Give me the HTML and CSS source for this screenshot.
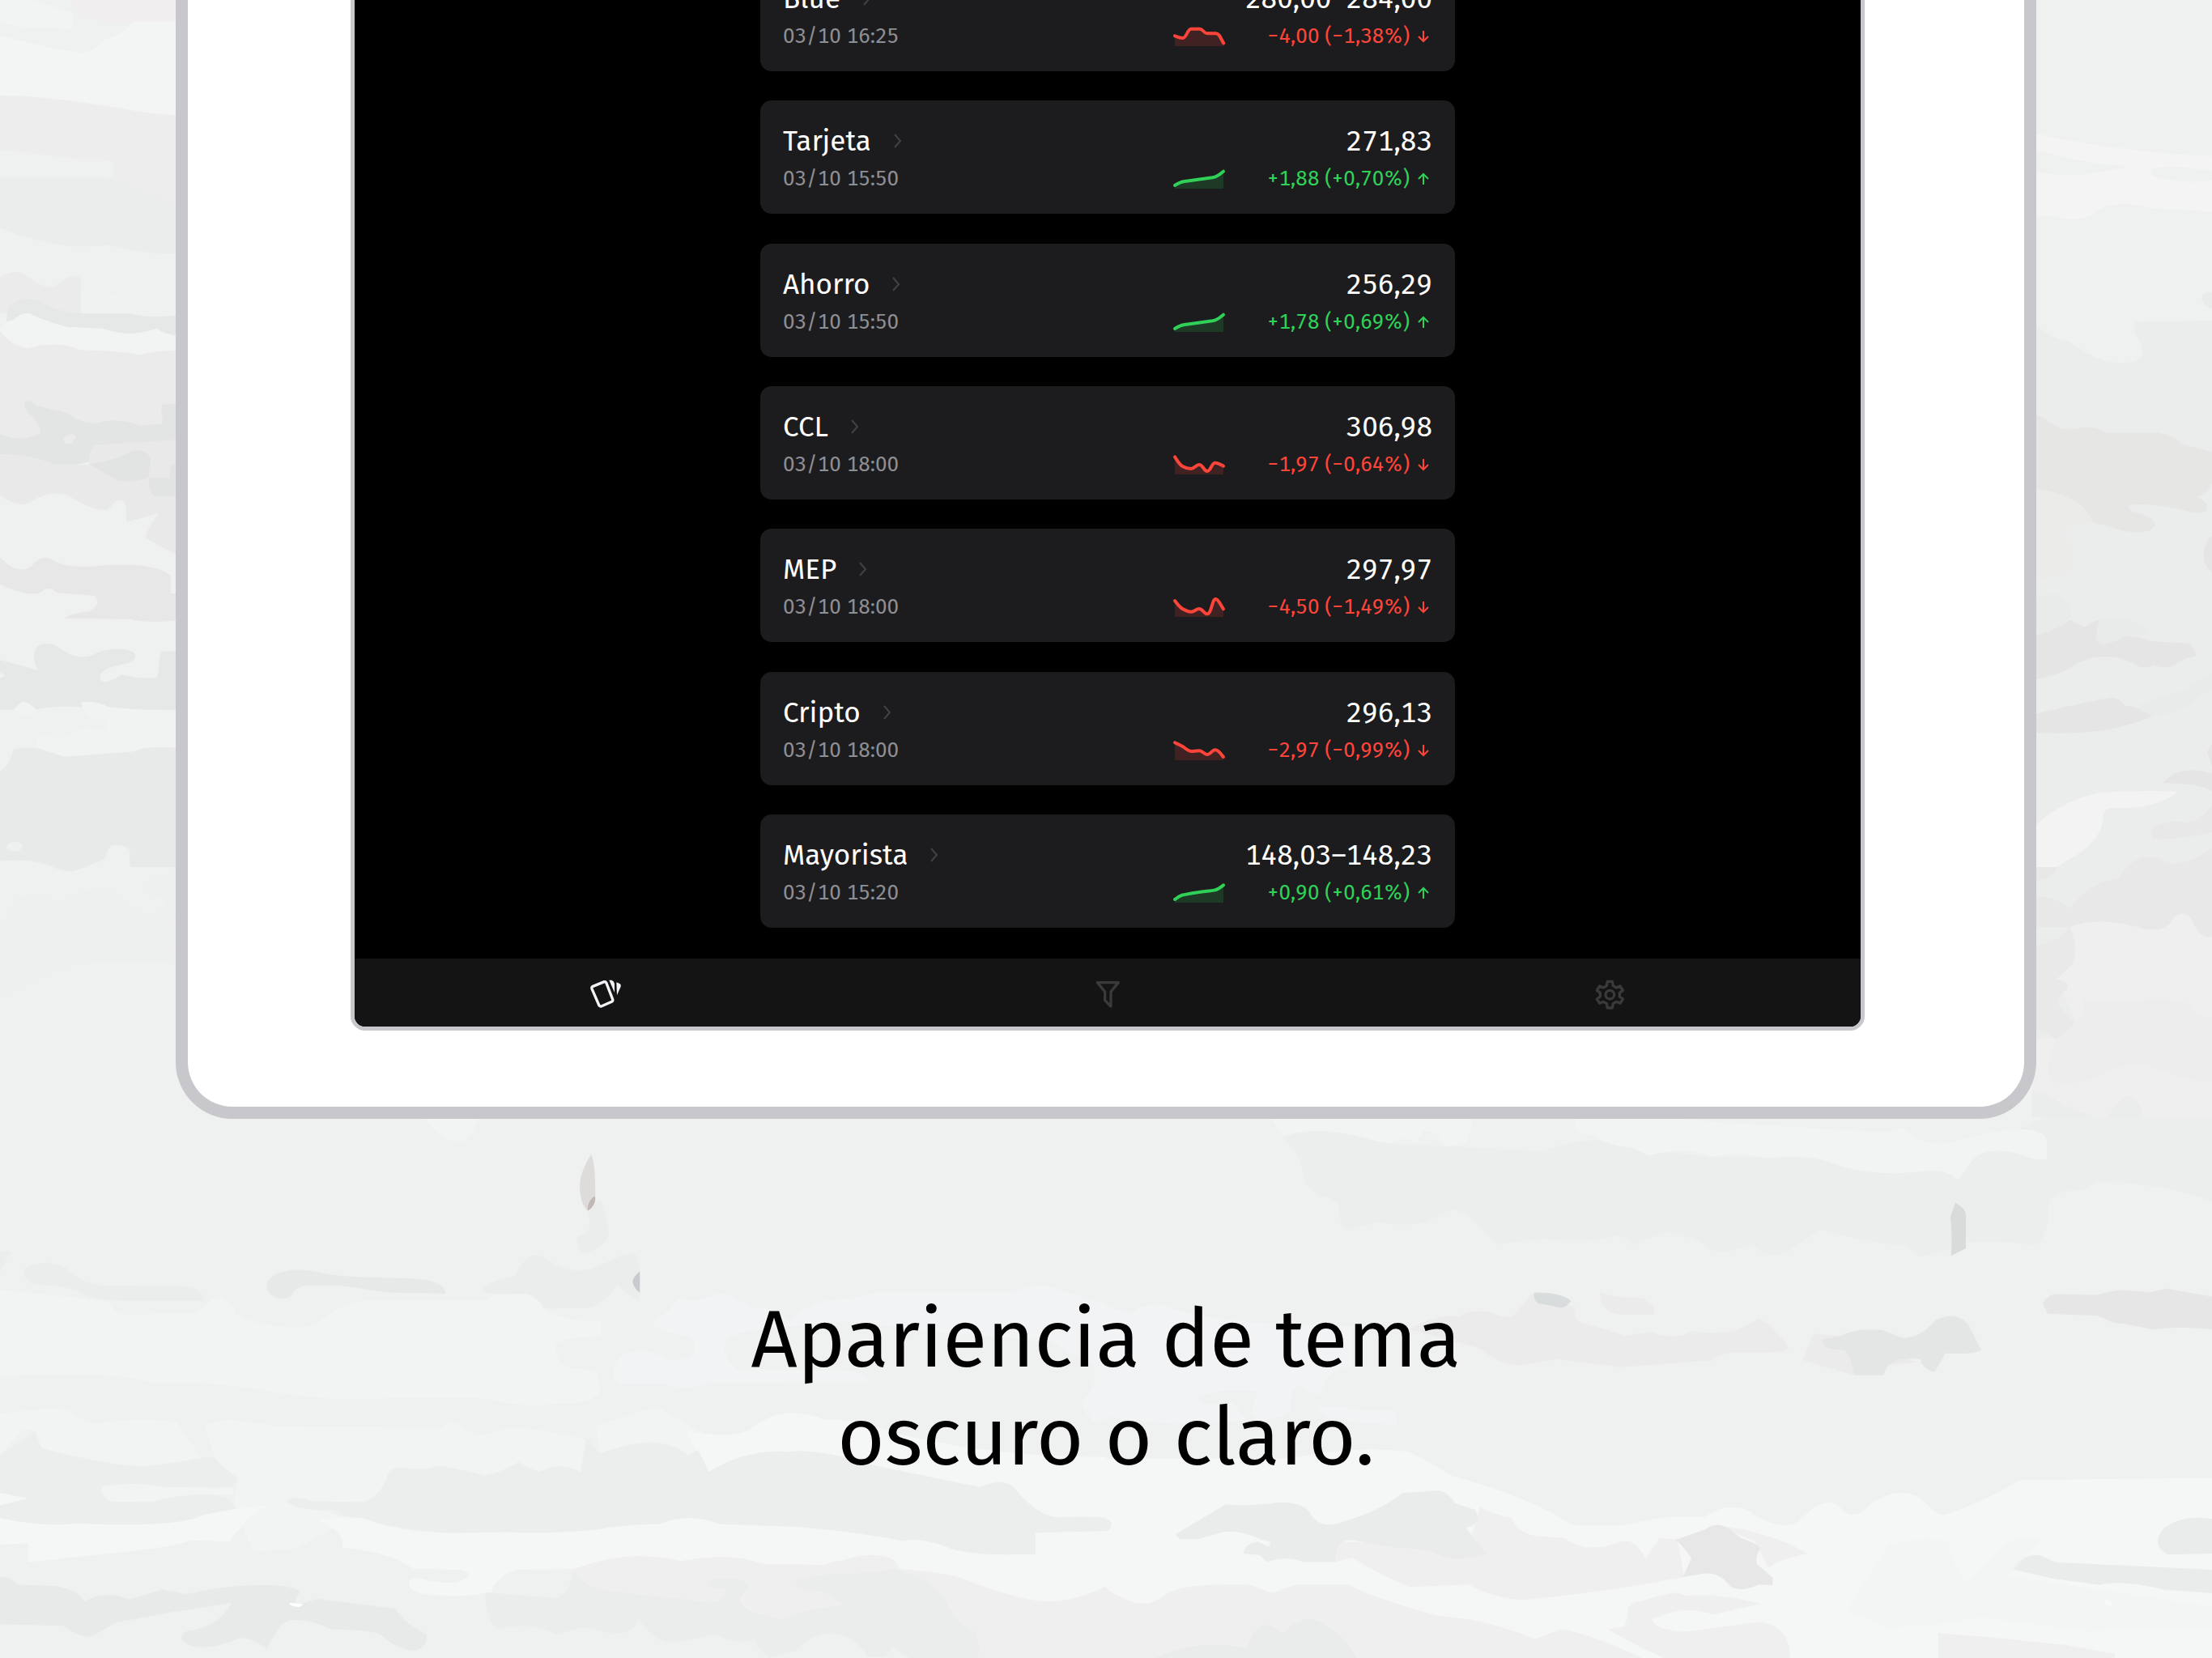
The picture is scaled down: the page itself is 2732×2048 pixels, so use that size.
FILE: index.html
```html
<!DOCTYPE html>
<html lang="es">
<head>
<meta charset="utf-8">
<meta name="viewport" content="width=device-width, initial-scale=1">
<title>Apariencia de tema oscuro o claro</title>
<link rel="stylesheet" href="styles.css">
</head>
<body>
<div class="page">
<svg class="backdrop" viewBox="0 0 2732 2048" preserveAspectRatio="xMidYMid slice" aria-hidden="true">
  <!-- left edge -->
  <g transform="scale(.3333 .8801)">
    <path fill="#f2f4f3" d="M0 0H120L265 18Q280 30 262 40Q230 43 200 37Q150 43 0 32Z"/>
    <path fill="#f0eeee" d="M270 0H660V30H480Q340 34 270 10Z"/>
    <path fill="#f3f5f4" d="M0 50Q200 70 310 74Q350 72 385 56Q450 50 495 30H660V162Q560 160 460 153Q150 133 0 134Z"/>
    <path fill="#eeeded" d="M0 134Q150 133 460 153Q560 160 660 162V290Q560 270 440 256L0 250Z"/>
    <path fill="#eff1f0" d="M0 210L310 224H405Q420 228 420 238Q420 250 400 251H0Z"/>
    <path fill="#ebedec" d="M0 249H400Q560 270 660 290V356Q560 358 400 344Q240 350 140 337Q60 330 0 319Z"/>
    <path fill="#ecebeb" d="M0 390Q60 372 120 393Q190 412 230 393Q260 387 300 387V440H0Z"/>
    <path fill="#f0f2f1" d="M302 408L520 418Q560 422 530 430L490 440H302Z"/>
    <path fill="#e6e8e7" d="M25 448Q25 428 50 425Q100 414 150 423Q210 438 310 440H480Q560 448 660 442V472H500Q350 460 210 458Q100 440 25 452Z"/>
    <path fill="#ebebeb" d="M0 465L100 480H660V620H380L0 640Z"/>
    <path fill="#f2f4f3" d="M0 463Q15 450 45 450Q80 438 110 440Q160 450 250 459L380 461Q480 475 580 461Q610 470 660 471V492Q580 492 520 498Q450 492 300 491Q210 477 100 489Q30 483 0 463Z"/>
    <path fill="#e3e5e4" d="M0 609Q90 622 150 608Q155 602 120 585Q80 573 95 563Q110 560 140 570Q210 575 250 580Q320 600 390 591Q450 587 520 597L600 595Q605 590 598 578Q595 567 610 567H660V618L350 625Q330 635 330 648Q270 655 200 652Q90 636 0 638ZM235 617Q240 625 265 622Q290 613 275 610Q245 607 235 617Z" fill-rule="evenodd"/>
    <path fill="#e9e9e9" d="M0 638Q90 636 200 652H330Q330 630 350 625L660 617V780L540 755Q545 740 590 720L468 733Q470 700 450 702Q430 700 400 716Q350 718 260 697Q190 685 110 705Q70 714 0 695Z"/>
    <path fill="#e2e4e3" d="M330 651Q410 649 490 633Q550 629 558 646L550 670Q500 678 440 675ZM550 671H630Q625 650 650 651V697H580Q550 694 550 671Z"/>
    <path fill="#e7e7e7" d="M0 782Q70 810 120 793Q160 775 210 789Q270 799 400 793Q580 790 632 808V833H660V870Q560 876 480 869L240 868Q260 860 330 858Q380 848 350 836L210 832Q180 820 150 832Q100 838 0 820Z"/>
    <path fill="#e6e8e7" d="M0 926Q80 934 142 941Q110 920 140 907Q180 897 230 912Q300 930 360 916Q440 906 495 915Q520 928 440 934Q360 939 372 955Q390 962 450 947Q540 954 580 951Q590 945 590 925Q595 913 610 914H660V996H350Q250 987 130 996H0V952L20 948L0 943Z"/>
    <path fill="#f1f3f2" d="M50 996L80 985Q110 985 135 996Q90 1012 50 996ZM300 986Q360 983 400 992Q550 998 660 998V1050Q540 1045 490 1055Q320 1057 240 1063Q190 1060 135 1048Q140 1030 170 1032Q220 1045 270 1030Q310 1018 370 1024Q400 1023 395 1015Q390 1008 340 1010Q310 1003 300 986Z"/>
    <path fill="#e8eae9" d="M0 1082Q30 1078 50 1052Q80 1048 140 1050L240 1062Q400 1058 490 1055Q550 1046 660 1050V1217H490Q475 1218 482 1195Q470 1185 420 1186Q400 1187 390 1205Q330 1216 270 1223Q220 1222 180 1214Q90 1204 0 1209ZM23 1190Q40 1197 70 1194Q95 1187 70 1182Q30 1180 23 1190Z" fill-rule="evenodd"/>
    <path fill="#eceeed" d="M0 1305Q30 1290 60 1262Q140 1250 220 1268Q300 1245 410 1249Q450 1270 500 1280Q600 1290 620 1260Q520 1260 530 1240Q580 1228 660 1225V1240L640 1350H400Q230 1345 0 1400Z" opacity=".35"/>
  </g>
  <!-- right edge -->
  <g transform="translate(2490 0) scale(.3333 .8801)">
    <path fill="#ebedec" d="M60 445Q90 470 200 480Q320 515 430 508Q490 500 460 480Q420 460 445 452L726 450V1568H60Z"/>
    <path fill="#f3f4f3" d="M60 187Q420 215 726 219V240Q560 230 510 237Q490 243 510 247Q620 260 726 253V297L500 292Q360 278 290 299Q220 315 140 303H60V241Q220 250 290 243L420 234Q220 228 60 208Z"/>
    <path fill="#e9ebea" d="M726 410Q690 408 688 420Q700 432 726 433Z"/>
    <path fill="#e6e6e4" d="M60 578L165 601Q210 605 240 600Q280 597 340 607H530Q590 612 620 624L726 634V678Q710 692 670 697Q715 705 708 715Q690 724 630 717Q520 707 450 708Q400 708 430 718Q520 725 514 738Q490 752 400 745L285 733Q240 695 60 685Z"/>
    <path fill="#ebebea" d="M60 685Q250 695 285 733Q180 735 175 750Q230 775 215 796Q170 815 60 815Z"/>
    <path fill="#e5e5e5" d="M726 752Q695 760 695 780Q695 795 726 803ZM60 892Q150 885 200 870L255 880Q280 873 310 869Q295 890 300 900Q330 910 370 896Q430 888 500 900L640 903Q660 908 668 921Q610 925 590 933Q550 940 510 933Q470 942 430 930Q310 911 210 935Q160 948 60 954ZM60 1003Q200 990 350 979Q375 978 405 990Q460 993 505 1005Q330 1035 60 1028ZM545 1099Q600 1072 726 1085V1111Q690 1100 545 1099ZM726 1044L708 1055L726 1076Z"/>
    <path fill="#e9ebea" d="M310 869Q430 858 500 890Q440 888 400 893Q330 910 300 900ZM726 945L610 970Q460 985 450 993L500 1004Q610 1005 680 978L726 970ZM60 840Q200 820 204 865Q150 888 60 892Z"/>
    <path fill="#f3f3f3" d="M60 1162Q180 1120 320 1112Q480 1109 600 1111Q540 1130 430 1134H350Q320 1135 320 1155Q300 1185 210 1203L150 1217H60Z"/>
    <path fill="#e8e8e8" d="M726 1129Q690 1152 630 1154Q560 1150 510 1161Q490 1170 510 1178Q620 1178 726 1168ZM200 1275Q270 1237 380 1233Q440 1195 530 1204Q600 1225 726 1190V1315Q680 1320 650 1290Q610 1272 570 1296Q530 1312 440 1300Q300 1287 200 1301H60V1260Q140 1255 200 1275ZM60 1217H152Q140 1235 60 1236Z"/>
    <path fill="#f0efef" d="M200 1301Q300 1287 440 1300Q530 1312 570 1296Q610 1272 650 1290Q680 1320 726 1315V1568H60V1458H150L235 1443L175 1395L150 1374Q225 1350 218 1325Q215 1310 200 1301Z"/>
    <path fill="#e9e9e9" d="M60 1328Q150 1325 200 1301Q235 1335 205 1355L150 1374Q200 1380 190 1388Q150 1400 155 1410L235 1443Q190 1446 150 1458Q100 1445 60 1444Z"/>
    <path fill="#ededed" d="M250 1404Q400 1410 480 1403Q600 1400 640 1410Q680 1430 726 1428V1518Q640 1520 540 1502Q410 1485 330 1508Q210 1525 130 1518Q110 1505 130 1480L150 1458Q220 1440 250 1420Z"/>
    <path fill="#ebedec" d="M60 1532Q110 1532 170 1550L300 1568H60ZM340 1568Q380 1540 420 1538Q460 1542 470 1568Z"/>
  </g>
  <!-- lower left -->
  <g transform="translate(0 1380) scale(.8712 .426)">
    <path fill="#f2f4f3" d="M600 0Q625 70 655 70Q668 60 680 0ZM0 500L130 528L155 535Q162 575 180 573L280 567Q300 525 310 522Q328 530 335 570Q350 600 420 612Q445 610 475 560Q500 532 520 531H690L700 515L740 512Q765 525 770 553Q800 595 852 592V635Q790 640 788 660Q788 720 810 728Q850 730 846 750L852 795Q830 835 795 830Q740 845 688 815Q580 810 520 817Q440 820 370 790Q270 760 215 772Q190 750 110 745L0 750Z"/>
    <path fill="#f2f4f3" d="M0 860L75 843Q110 855 110 870L135 890Q180 870 250 882L285 987Q240 1010 200 1012Q160 1010 60 960L50 910L32 905L0 980ZM290 895Q300 880 330 878Q380 890 390 897L625 900L640 882L675 920Q700 920 720 900Q760 900 830 935L823 1028Q800 1010 790 1015L765 1028L735 1000Q715 1030 688 1039L625 1010Q600 1030 570 1018Q550 1015 550 1040Q540 1100 520 1116H450Q410 1090 405 1115Q415 1135 450 1140Q475 1145 490 1170L420 1250L360 1260L330 1130L337 1050L305 990ZM845 897Q890 860 932 842L1000 920L990 965L975 980Q960 945 920 943Q890 945 850 975ZM145 1070L200 1060Q230 1075 330 1073V1095H270Q240 1115 210 1116H160Q140 1100 145 1070Z"/>
    <path fill="#ebedec" d="M0 390L15 388L0 450ZM35 440Q50 420 70 422Q95 430 100 450Q120 485 150 488L260 490Q290 500 290 533H180Q130 530 115 510Q100 490 50 485Q30 470 35 440ZM685 495Q700 470 730 460Q740 410 757 400Q770 400 785 425Q820 465 860 420Q890 390 900 397Q910 410 907 530Q895 530 875 485Q860 540 835 553H770Q760 510 740 512H700Q685 510 685 495ZM832 270L852 240Q865 320 863 350Q840 400 822 393Q815 350 820 342Q845 340 832 270Z"/>
    <path fill="#e7e9e8" d="M378 490Q380 445 425 442Q445 445 465 455Q490 465 580 467Q630 470 632 512L550 508L485 489H430Q415 500 412 520Q400 535 385 515Q378 505 378 490Z"/>
    <path fill="#dedcdb" d="M838 108Q822 160 822 200Q822 250 833 270L844 232Q844 130 838 108Z"/>
    <path fill="#c2b8b5" d="M843 229Q833 240 833 271Q844 260 844 235Z"/>
    <path fill="#c9cace" d="M907 447Q896 465 897 480Q900 500 907 508Z"/>
    <path fill="#f2f3f5" d="M925 590Q950 570 960 525Q985 540 1020 510Q1045 520 1065 553H1085L1120 590Q1150 530 1190 528L1215 522L1240 508L1440 506Q1470 480 1490 492Q1510 510 1568 540V880H1550Q1530 840 1535 820Q1560 770 1550 720L1490 650L1310 620L1200 590L1060 620L1030 640Q1020 690 1045 730L1200 735Q1240 750 1230 772L1010 770Q970 795 940 773H880Q860 750 880 690Q905 665 935 690Q960 720 980 690Q995 650 970 632Q925 620 925 590Z"/>
    <path fill="#f5f7f6" d="M975 910Q1030 930 1060 910Q1090 860 1120 857Q1150 860 1170 878Q1200 875 1230 890Q1370 985 1568 985V1160Q1540 1155 1500 1161Q1470 1155 1440 1080Q1420 1050 1390 1073L1200 1000Q1160 960 1120 970Q1060 960 1005 1028Q985 970 975 910Z"/>
    <path fill="#eceeed" d="M0 980L50 910Q55 960 62 962Q150 1010 200 1012Q250 1005 285 987H305Q310 1010 337 1045Q335 1070 320 1074L235 1073Q190 1055 145 1070Q140 1100 160 1115L215 1116Q245 1095 290 1095Q330 1095 335 1140Q290 1145 275 1165Q220 1190 110 1178Q60 1190 0 1162V1125L40 1105L0 1090ZM408 1110Q420 1095 440 1113L515 1116Q540 1100 550 1035Q560 1010 580 1018Q600 1025 620 1010Q650 1020 688 1039Q710 1030 735 1000Q750 1025 765 1028Q790 995 823 1028L832 930L850 975Q900 940 930 943Q960 955 975 980L990 965L1005 1028Q1060 960 1120 970Q1160 960 1240 1010L1390 1073Q1425 1040 1440 1080Q1470 1155 1500 1161Q1540 1155 1568 1165V1200L1468 1205V1267Q1370 1275 1340 1245Q1310 1220 1280 1228Q1200 1200 1130 1188L1020 1180Q975 1145 935 1180Q890 1180 850 1195Q780 1210 720 1203L640 1206Q570 1195 500 1163L475 1140Q410 1140 408 1110Z"/>
    <path fill="#f5f7f6" d="M0 1090L40 1105L0 1125ZM0 1162Q60 1190 110 1178Q220 1190 275 1165Q290 1145 380 1125Q370 1140 355 1155L325 1230L270 1227Q240 1250 130 1270L40 1290V1235L0 1240ZM452 1170Q480 1155 515 1163Q570 1205 640 1206L720 1203Q780 1210 850 1195Q890 1180 935 1180Q975 1145 1020 1180L1130 1188Q1200 1200 1280 1228Q1310 1220 1340 1245Q1370 1275 1468 1267V1205L1568 1200V1360Q1530 1400 1490 1405Q1450 1405 1380 1350Q1350 1320 1275 1310Q1270 1260 1220 1272L1165 1298L1080 1295Q1040 1260 965 1287Q890 1250 815 1310L730 1312Q700 1340 697 1378L685 1380Q650 1395 600 1383Q580 1375 580 1350Q580 1330 600 1340Q650 1365 665 1330Q665 1310 640 1312L585 1308Q550 1260 485 1247Q490 1200 452 1170Z"/>
    <path fill="#f0efef" d="M815 1310Q890 1250 965 1287Q1040 1260 1080 1295L1165 1298L1220 1272Q1270 1260 1275 1310Q1350 1320 1380 1350Q1450 1405 1490 1405Q1530 1400 1568 1360V1568H1385V1510Q1350 1470 1345 1430L1190 1415Q1140 1435 1110 1457Q1050 1430 1052 1380L1000 1345L1030 1375Q1030 1410 1000 1405L850 1370Q820 1350 815 1310Z"/>
    <path fill="#ebedec" d="M815 1312Q820 1350 850 1370L1000 1405Q1030 1410 1028 1370Q1000 1365 1002 1345Q1030 1325 1060 1350Q1065 1360 1050 1390Q1050 1435 1080 1440L1110 1457Q1150 1420 1195 1415Q1180 1385 1160 1374Q1125 1370 1128 1345Q1145 1330 1185 1323Q1240 1325 1265 1308Q1325 1340 1340 1400Q1360 1480 1380 1490Q1390 1500 1387 1568H1290L1265 1535L1255 1565H1230Q1210 1495 1175 1497Q1150 1500 1130 1545L1090 1568L1075 1540L1070 1515Q1040 1530 1015 1500L960 1522Q930 1530 905 1455Q900 1495 870 1498L825 1478L790 1500Q750 1460 710 1483Q690 1480 688 1378L790 1395L805 1370Z"/>
    <path fill="#e8eae9" d="M0 1333Q15 1333 25 1355L80 1360Q110 1370 120 1405Q145 1370 185 1398L230 1370L265 1383Q320 1355 380 1356Q425 1360 425 1380Q415 1400 420 1415L450 1397L560 1425Q575 1470 605 1500Q605 1545 585 1547Q560 1540 540 1500Q520 1485 470 1485Q420 1440 400 1470Q385 1510 378 1542Q360 1510 340 1510Q300 1545 275 1535Q245 1515 265 1490Q310 1480 328 1408L245 1435L165 1465L130 1505Q110 1510 90 1475L0 1470Z"/>
    <path fill="#fff" d="M410 1408L430 1412L425 1420Q410 1420 410 1408ZM130 528L138 534Z"/>
  </g>
  <!-- lower right -->
  <g transform="translate(1366 1380) scale(.8712 .426)">
    <path fill="#eceeed" d="M250 60Q300 20 345 45Q380 70 400 76L620 98Q700 40 745 90L860 115L1000 118L1180 152L1330 0H1568V245Q1500 190 1405 188L1385 212Q1340 210 1337 250Q1335 365 1315 370Q1260 355 1215 365L1185 390L1155 405L1130 370Q1090 370 1015 325L980 370Q945 430 915 367Q880 400 860 385Q820 330 790 335L745 372Q740 345 725 342Q680 370 620 353L555 368L530 320Q510 270 490 268L450 305Q420 320 385 303L345 328Q330 320 330 260Q325 235 310 232Q280 210 280 160Q270 90 250 60Z"/>
    <path fill="#f2f4f3" d="M235 5H520Q515 85 500 77L480 86L468 45L450 40L440 75L425 60L400 76L370 62Q300 20 250 55ZM665 5H820L870 15L1110 45L1130 30Q1160 85 1190 76L1260 42Q1330 20 1334 70V120Q1320 130 1300 110Q1250 80 1230 120L1208 182Q1190 150 1165 155Q1090 175 1040 140Q990 100 940 120L895 103L860 115Q820 80 770 112L745 86Q720 90 690 53Q660 50 665 5Z"/>
    <path fill="#d9dbda" d="M1204 248Q1222 265 1219 300V380L1198 402Q1200 340 1197 290Z"/>
    <path fill="#d8dcdc" d="M607 509C630 508 648 515 659 532C655 545 650 553 642 552C630 545 622 544 613 540Q605 530 607 509Z"/>
    <path fill="#ecebeb" d="M430 615Q470 570 500 577Q520 555 545 565Q570 590 580 570L605 510L665 550Q660 590 680 600Q710 615 735 633L770 622Q810 650 830 620Q890 640 925 583Q950 610 968 670Q960 685 910 682Q870 680 860 705L730 725L640 702L585 720Q550 710 530 670ZM700 505Q710 520 760 525Q785 550 775 573H730Q700 565 700 505ZM988 705L1003 627L1060 640L1150 710L1105 720L1060 748Z"/>
    <path fill="#d8dcdc" d="M607 509C630 508 648 515 659 532C655 545 650 553 642 552C630 545 622 544 613 540Q605 530 607 509Z"/>
    <path fill="#e4e6e5" d="M1015 645L1040 635Q1065 610 1100 617L1130 640Q1155 640 1175 590Q1205 560 1222 600L1241 675Q1230 690 1190 684L1175 738Q1165 740 1155 710Q1160 695 1130 702Q1105 710 1103 748H1060Q1055 680 1045 675Q1015 675 1015 645Z"/>
    <path fill="#e6e6e6" d="M1328 540Q1335 510 1350 513L1405 515Q1430 500 1445 502L1480 507L1503 497L1568 520V615L1530 610Q1500 610 1485 617Q1440 595 1430 597L1405 575L1335 570Z"/>
    <path fill="#f2f3f5" d="M0 545L35 572Q60 520 100 560Q180 605 350 605V720Q310 730 305 800Q295 805 275 780Q260 780 262 850Q250 875 215 880L205 860L215 795Q160 785 130 810Q130 840 180 830L200 880L100 890L0 870ZM300 840Q340 835 360 850H410L413 890Q350 890 330 873Q300 875 300 840Z"/>
    <path fill="#f5f7f6" d="M0 990L260 990Q350 950 430 970Q460 1000 490 1040Q600 1100 660 1182L730 1183L790 1160L850 1158Q880 1115 910 1140Q950 1200 980 1175Q1020 1090 1040 1130Q1060 1180 1085 1120Q1130 1060 1160 1115Q1180 1160 1190 1152Q1250 1110 1295 1052L1568 1046V1568H1430L1180 1495V1568H970Q940 1450 920 1465L820 1493Q770 1480 770 1460Q820 1410 860 1442L930 1410L860 1385Q770 1390 745 1410L735 1475L800 1568H720L645 1485L607 1514Q550 1460 470 1445Q370 1390 345 1355H270L235 1380L205 1356Q100 1350 80 1390Q50 1440 0 1365Z"/>
    <path fill="#eceeed" d="M-2 1163Q8 1168 8 1182Q6 1198 -2 1201Z"/>
    <path fill="#f0efef" d="M530 1130Q560 1160 575 1160Q580 1200 610 1215L650 1220Q680 1270 730 1230Q750 1220 765 1280L785 1220L810 1225L820 1333Q700 1380 590 1400Q540 1390 515 1355L430 1362Q380 1320 350 1277L325 1290V1230Q460 1240 510 1270ZM865 1183Q940 1200 995 1265Q940 1290 940 1310L920 1230Z"/>
    <path fill="#f0efef" d="M0 1365Q50 1440 80 1390Q100 1350 205 1356L235 1380L270 1355H345Q370 1390 470 1445Q550 1460 607 1514L645 1485Q690 1500 760 1568H0ZM740 1475V1420Q770 1390 810 1378Q850 1410 880 1390L928 1410L860 1442Q820 1410 775 1450Q770 1480 815 1493L930 1465Q970 1480 970 1568H790Q730 1510 712 1485ZM1180 1497L1240 1505L1360 1530L1430 1555V1568H1180Z"/>
    <path fill="#eaeceb" d="M98 1210L170 1122Q200 1130 245 1117Q280 1115 290 1150Q305 1200 340 1170Q390 1140 420 1090L470 1082Q485 1085 495 1120L523 1138Q535 1180 510 1190L540 1267Q500 1290 475 1272Q460 1250 410 1248L350 1227Q325 1220 325 1290H280Q255 1270 228 1290L218 1270L195 1265Q195 1240 215 1230L230 1245Q240 1230 220 1225Q190 1195 165 1203L130 1224H105ZM1500 1190Q1530 1150 1568 1165V1265L1505 1268Q1480 1240 1500 1190ZM1283 1310Q1300 1265 1325 1270L1345 1290L1568 1312V1380L1500 1370Q1440 1340 1410 1356L1340 1337ZM70 1568Q130 1510 200 1540Q210 1470 230 1472L250 1495Q280 1440 300 1460Q340 1500 355 1568Z"/>
    <path fill="#e7e7e7" d="M808 1225L850 1195Q865 1170 885 1195L900 1220Q930 1240 926 1255Q918 1290 925 1300L945 1335V1357L925 1355Q900 1380 885 1360Q870 1320 850 1323L818 1333L830 1280Q825 1260 808 1225Z"/>
    <path fill="#fff" d="M1415 1397L1426 1405L1427 1420Q1418 1420 1415 1397ZM965 1538L972 1548Z"/>
    <path fill="#f2f4f3" d="M1110 1240Q1130 1220 1195 1228Q1195 1290 1220 1345L1280 1230L1330 1215L1310 1260L1280 1330L1568 1420V1480L1390 1490L1240 1450L1190 1470L1110 1480L1050 1430Z" opacity=".6"/>
  </g>
</svg>

<main class="device">
  <div class="screen">
    <section class="quotes" aria-label="Cotizaciones">
      <article class="card">
        <a class="name" href="#blue">Blue <svg class="chevron" viewBox="0 0 10 18"><path d="M1 1l7 8-7 8"/></svg></a>
        <span class="price">280,00–284,00</span>
        <time class="date">03/10 16:25</time>
        <div class="trend down">
          <svg class="spark" viewBox="0 0 180 72"><path class="area" d="M0 34C10 38 18 42 30 42C42 42 48 8 60 8H92C104 8 108 25 120 25H152C166 25 170 45 181 61V72H0Z"/><path class="line" d="M0 34C10 38 18 42 30 42C42 42 48 8 60 8H92C104 8 108 25 120 25H152C166 25 170 45 181 61"/></svg>
          <span class="change">−4,00 (−1,38%) <svg class="arrow" viewBox="0 0 14 16"><path d="M7 1v13M1 8l6 6 6-6"/></svg></span>
        </div>
      </article>
      <article class="card">
        <a class="name" href="#tarjeta">Tarjeta <svg class="chevron" viewBox="0 0 10 18"><path d="M1 1l7 8-7 8"/></svg></a>
        <span class="price">271,83</span>
        <time class="date">03/10 15:50</time>
        <div class="trend up">
          <svg class="spark" viewBox="0 0 180 72"><path class="area" d="M0 60C12 53 20 48 32 46L140 31C158 28 168 18 180 8V72H0Z"/><path class="line" d="M0 60C12 53 20 48 32 46L140 31C158 28 168 18 180 8"/></svg>
          <span class="change">+1,88 (+0,70%) <svg class="arrow" viewBox="0 0 14 16"><path d="M7 15V2M1 8l6-6 6 6"/></svg></span>
        </div>
      </article>
      <article class="card">
        <a class="name" href="#ahorro">Ahorro <svg class="chevron" viewBox="0 0 10 18"><path d="M1 1l7 8-7 8"/></svg></a>
        <span class="price">256,29</span>
        <time class="date">03/10 15:50</time>
        <div class="trend up">
          <svg class="spark" viewBox="0 0 180 72"><path class="area" d="M0 60C12 53 20 48 32 46L140 31C158 28 168 18 180 8V72H0Z"/><path class="line" d="M0 60C12 53 20 48 32 46L140 31C158 28 168 18 180 8"/></svg>
          <span class="change">+1,78 (+0,69%) <svg class="arrow" viewBox="0 0 14 16"><path d="M7 15V2M1 8l6-6 6 6"/></svg></span>
        </div>
      </article>
      <article class="card">
        <a class="name" href="#ccl">CCL <svg class="chevron" viewBox="0 0 10 18"><path d="M1 1l7 8-7 8"/></svg></a>
        <span class="price">306,98</span>
        <time class="date">03/10 18:00</time>
        <div class="trend down">
          <svg class="spark" viewBox="0 0 180 72"><path class="area" d="M0 7C10 22 18 37 30 43C40 49 48 51 60 51C74 51 78 36 90 36C104 36 108 60 120 60C134 60 136 29 149 29C160 29 168 34 180 41V72H0Z"/><path class="line" d="M0 7C10 22 18 37 30 43C40 49 48 51 60 51C74 51 78 36 90 36C104 36 108 60 120 60C134 60 136 29 149 29C160 29 168 34 180 41"/></svg>
          <span class="change">−1,97 (−0,64%) <svg class="arrow" viewBox="0 0 14 16"><path d="M7 1v13M1 8l6 6 6-6"/></svg></span>
        </div>
      </article>
      <article class="card">
        <a class="name" href="#mep">MEP <svg class="chevron" viewBox="0 0 10 18"><path d="M1 1l7 8-7 8"/></svg></a>
        <span class="price">297,97</span>
        <time class="date">03/10 18:00</time>
        <div class="trend down">
          <svg class="spark" viewBox="0 0 180 72"><path class="area" d="M0 12C10 24 18 36 30 43C40 49 48 53 60 53C74 53 78 42 90 42C104 42 108 61 120 61C136 61 138 6 151 6C160 6 170 26 180 43V72H0Z"/><path class="line" d="M0 12C10 24 18 36 30 43C40 49 48 53 60 53C74 53 78 42 90 42C104 42 108 61 120 61C136 61 138 6 151 6C160 6 170 26 180 43"/></svg>
          <span class="change">−4,50 (−1,49%) <svg class="arrow" viewBox="0 0 14 16"><path d="M7 1v13M1 8l6 6 6-6"/></svg></span>
        </div>
      </article>
      <article class="card">
        <a class="name" href="#cripto">Cripto <svg class="chevron" viewBox="0 0 10 18"><path d="M1 1l7 8-7 8"/></svg></a>
        <span class="price">296,13</span>
        <time class="date">03/10 18:00</time>
        <div class="trend down">
          <svg class="spark" viewBox="0 0 180 72"><path class="area" d="M0 7C10 12 20 16 30 22C40 28 48 38 60 39C72 39 78 37 90 37C104 37 108 51 120 51C132 51 138 34 150 34C162 34 170 48 180 60V72H0Z"/><path class="line" d="M0 7C10 12 20 16 30 22C40 28 48 38 60 39C72 39 78 37 90 37C104 37 108 51 120 51C132 51 138 34 150 34C162 34 170 48 180 60"/></svg>
          <span class="change">−2,97 (−0,99%) <svg class="arrow" viewBox="0 0 14 16"><path d="M7 1v13M1 8l6 6 6-6"/></svg></span>
        </div>
      </article>
      <article class="card">
        <a class="name" href="#mayorista">Mayorista <svg class="chevron" viewBox="0 0 10 18"><path d="M1 1l7 8-7 8"/></svg></a>
        <span class="price">148,03–148,23</span>
        <time class="date">03/10 15:20</time>
        <div class="trend up">
          <svg class="spark" viewBox="0 0 180 72"><path class="area" d="M0 60C12 52 20 45 32 43C50 39 70 35 96 32C120 29 134 29 146 26C160 23 170 15 180 7V72H0Z"/><path class="line" d="M0 60C12 52 20 45 32 43C50 39 70 35 96 32C120 29 134 29 146 26C160 23 170 15 180 7"/></svg>
          <span class="change">+0,90 (+0,61%) <svg class="arrow" viewBox="0 0 14 16"><path d="M7 15V2M1 8l6-6 6 6"/></svg></span>
        </div>
      </article>
    </section>
    <nav class="tabs" aria-label="Secciones">
      <button class="tab active" type="button" aria-label="Cotizaciones">
        <svg viewBox="82 55 120 120"><path class="outline" d="M95 86L137 69Q142 68 144 72L168 134Q170 140 165 143L126 160Q121 161 118 157L91 95Q89 89 95 86Z"/><path class="solid" d="M155 63H164Q173 66 175 76V109ZM182 71L194 76Q200 79 198 87L184 119Z"/></svg>
      </button>
      <button class="tab" type="button" aria-label="Filtrar">
        <svg viewBox="82 55 120 120"><path class="outline" d="M104 72H182L154 106V160L132 138V106Z"/></svg>
      </button>
      <button class="tab" type="button" aria-label="Ajustes">
        <svg viewBox="85 55 120 120"><path class="outline" d="M137 68H155L158 84L170 91L184 85L194 101L182 110V124L194 133L184 149L170 143L158 150L155 166H137L134 150L122 143L108 149L98 133L110 124V110L98 101L108 85L122 91L134 84Z"/><circle class="outline" cx="146" cy="117" r="16"/></svg>
      </button>
    </nav>
  </div>
</main>
<h1 class="caption">Apariencia de tema<br>oscuro o claro.</h1>
</div>
</body>
</html>
```
FILE: styles.css
```css
* {
  box-sizing: border-box;
}

body {
  margin: 0;
  background: #eff1f0;
  font-family: "Fira Sans", "Noto Sans", sans-serif;
}

.page {
  position: relative;
  min-height: 100vh;
  padding: 0 217px;
  overflow: hidden;
}

.backdrop {
  position: absolute;
  inset: 0;
  width: 100%;
  height: 100%;
}

.device {
  position: relative;
  padding: 0 197px 94px 201px;
  background: #fff;
  border: 15px solid #c8c7cc;
  border-top: 0;
  border-radius: 0 0 70px 70px;
  overflow: hidden;
}

.screen {
  background: #000;
  border: 5px solid #c8c7cc;
  border-top: 0;
  border-radius: 0 0 18px 18px;
  overflow: hidden;
}

/* The list is scrolled, so its first card runs off the top edge. */
.quotes {
  display: flex;
  flex-direction: column;
  justify-content: space-between;
  width: 858px;
  max-width: 100%;
  height: 1198px;
  margin: -52px auto 38px;
}

.card {
  display: grid;
  grid-template-columns: 1fr auto;
  grid-template-rows: 48px 46px;
  align-items: center;
  height: 140px;
  padding: 26px 28px 0;
  background: #1c1c1e;
  border-radius: 14px;
  font-variant-numeric: tabular-nums;
}

.name {
  display: flex;
  align-items: center;
  gap: 28px;
  color: #fff;
  font-size: 35px;
  line-height: 48px;
  text-decoration: none;
}

.price {
  color: #fff;
  font-size: 35px;
  line-height: 48px;
  text-align: right;
}

.date {
  color: #8e8e93;
  font-size: 26px;
  line-height: 46px;
}

.trend {
  display: flex;
  align-items: center;
  gap: 54px;
}

.up {
  color: #30d158;
}

.down {
  color: #ff453a;
}

.change {
  display: flex;
  align-items: center;
  justify-content: space-between;
  width: 200px;
  margin-right: 4px;
  font-size: 26px;
  line-height: 46px;
  white-space: nowrap;
}

svg {
  fill: none;
}

.chevron {
  width: 10px;
  height: 18px;
  stroke: #424245;
  stroke-width: 2;
}

.spark {
  width: 60px;
  height: 24px;
  overflow: visible;
}

.line {
  stroke: currentColor;
  stroke-width: 12;
  stroke-linecap: round;
}

.area {
  fill: currentColor;
  opacity: .16;
}

.arrow {
  width: 14px;
  height: 16px;
  stroke: currentColor;
  stroke-width: 2;
}

.tabs {
  display: grid;
  grid-template-columns: repeat(3, 1fr);
  height: 84px;
  background: #141414;
}

.tab {
  display: flex;
  align-items: center;
  justify-content: center;
  padding: 4px 0 0;
  background: none;
  border: 0;
  color: #3a3a3c;
}

.tab svg {
  width: 40px;
  height: 40px;
}

.active {
  color: #f2f2f7;
}

.outline {
  stroke: currentColor;
  stroke-width: 10;
  stroke-linejoin: round;
}

.solid {
  fill: currentColor;
}

.caption {
  position: relative;
  margin: 212px 0 0;
  color: #000;
  font-size: 100px;
  font-weight: 400;
  line-height: 121px;
  text-align: center;
}
```
